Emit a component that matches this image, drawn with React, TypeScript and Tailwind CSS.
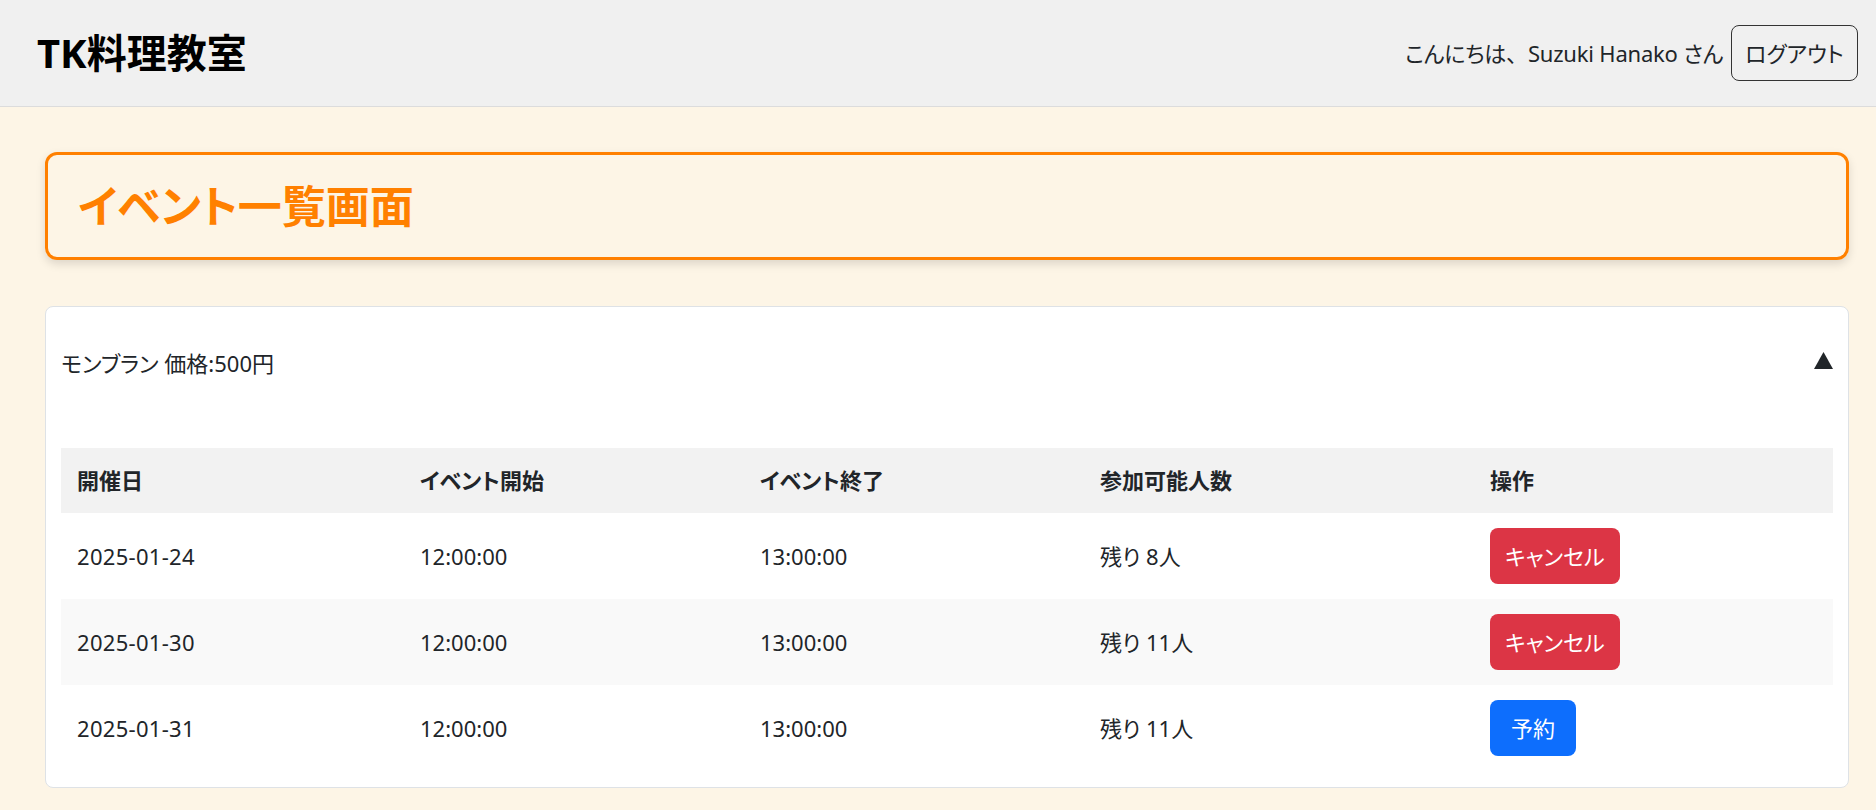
import React from 'react';

const EVENTS = [
  { date: '2025-01-24', start: '12:00:00', end: '13:00:00', left: 8, reserved: true },
  { date: '2025-01-30', start: '12:00:00', end: '13:00:00', left: 11, reserved: true },
  { date: '2025-01-31', start: '12:00:00', end: '13:00:00', left: 11, reserved: false },
];

export default function App() {
  return (
    <div className="min-h-screen bg-[#fdf5e6] text-[#212529] font-['Noto_Sans','Noto_Sans_CJK_JP',sans-serif] [font-feature-settings:'palt']">
      {/* Header */}
      <header className="h-[107px] bg-[#f0f0f0] border-b border-[#dcdcdc] flex items-center justify-between pl-[37px] pr-[18px]">
        <h1 className="text-[40px] font-bold leading-none text-black [font-feature-settings:normal]">TK料理教室</h1>
        <div className="flex items-center gap-2">
          <span className="text-[22px] tracking-[-0.2px]">
            こんにちは<span className="[font-feature-settings:normal]">、</span>Suzuki Hanako さん
          </span>
          <button className="w-[127px] h-[56px] border border-[#333] rounded-[8px] text-[22px] text-[#212529]">
            ログアウト
          </button>
        </div>
      </header>

      <main className="pt-[45px] pl-[45px] pr-[27px] pb-[23px]">
        {/* Page title */}
        <div className="h-[108px] border-[3px] border-[#ff8000] rounded-[12px] px-[30px] flex items-center shadow-[0_4px_10px_rgba(0,0,0,0.13)]">
          <h2 className="text-[44px] font-bold text-[#ff8000] leading-none">イベント一覧画面</h2>
        </div>

        {/* Event card */}
        <div className="mt-[46px] bg-white border border-[#dee2e6] rounded-[8px] px-[15px] pt-[15px] pb-[16px]">
          <div className="h-[82px] flex items-center justify-between">
            <span className="text-[22px]">モンブラン 価格:500円</span>
            <svg width="19" height="17" viewBox="0 0 19 17" className="mt-[-6px]">
              <polygon points="9.5,0 19,17 0,17" fill="#212529" />
            </svg>
          </div>

          <table className="mt-[44px] w-full table-fixed border-collapse text-[22px]">
            <thead>
              <tr className="bg-[#f2f2f2] h-[65px]">
                <th className="w-[343px] pl-[16px] text-left font-bold">開催日</th>
                <th className="w-[340px] pl-[16px] text-left font-bold">イベント開始</th>
                <th className="w-[340px] pl-[16px] text-left font-bold">イベント終了</th>
                <th className="w-[390px] pl-[16px] text-left font-bold">参加可能人数</th>
                <th className="pl-[16px] text-left font-bold">操作</th>
              </tr>
            </thead>
            <tbody>
              {EVENTS.map((ev, i) => (
                <tr key={ev.date} className={i % 2 === 1 ? 'bg-[#f9f9f9]' : 'bg-white'}>
                  <td className="pl-[16px] py-[15px] h-[86px] tracking-[0.3px]">{ev.date}</td>
                  <td className="pl-[16px] py-[15px]">{ev.start}</td>
                  <td className="pl-[16px] py-[15px]">{ev.end}</td>
                  <td className="pl-[16px] py-[15px]">残り {ev.left}人</td>
                  <td className="pl-[16px] py-[15px]">
                    {ev.reserved ? (
                      <button className="h-[56px] px-[15px] rounded-[8px] bg-[#dc3545] text-white">キャンセル</button>
                    ) : (
                      <button className="h-[56px] px-[21px] rounded-[8px] bg-[#0d6efd] text-white">予約</button>
                    )}
                  </td>
                </tr>
              ))}
            </tbody>
          </table>
        </div>
      </main>
    </div>
  );
}
